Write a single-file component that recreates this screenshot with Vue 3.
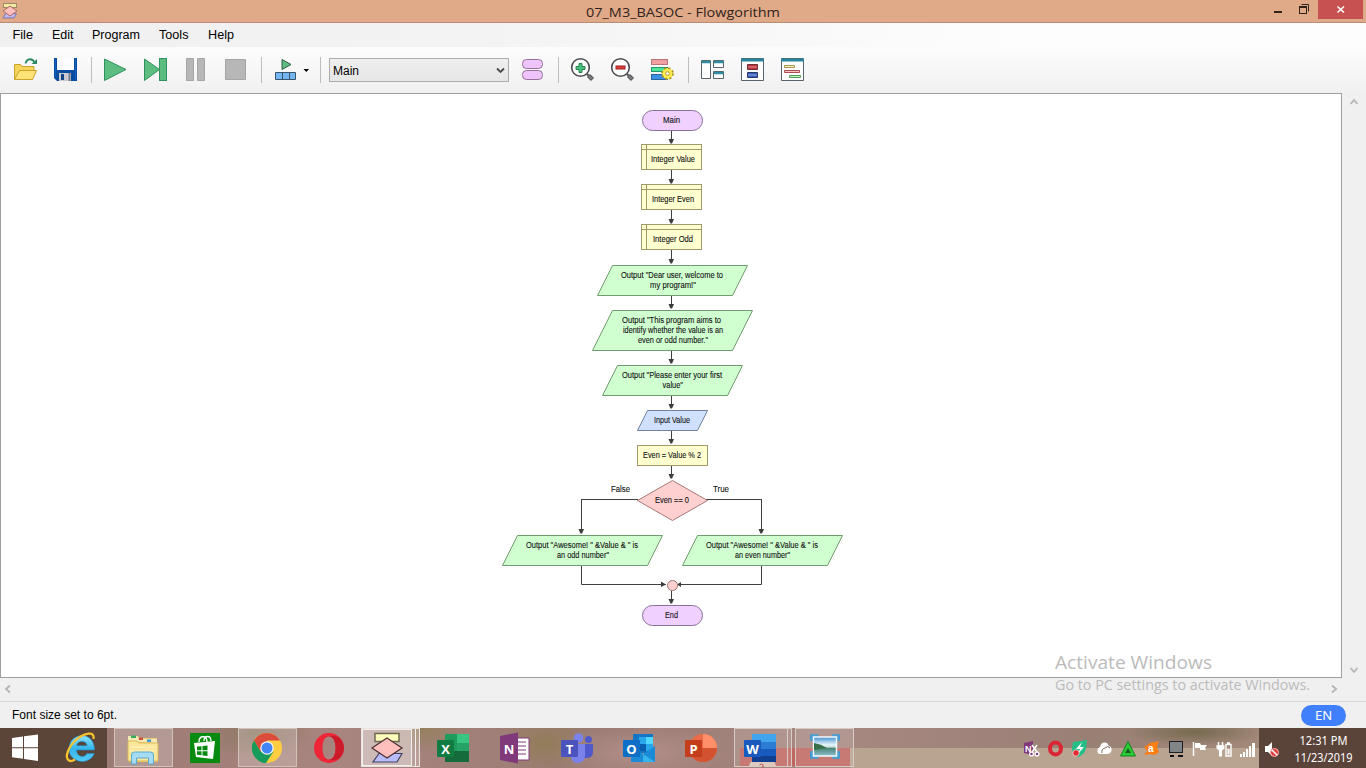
<script setup>
const menus = [
  { label: 'File', x: 12.5, w: 20.5 },
  { label: 'Edit', x: 52, w: 21.5 },
  { label: 'Program', x: 92, w: 48 },
  { label: 'Tools', x: 159, w: 29.5 },
  { label: 'Help', x: 208, w: 26 },
]

const declares = [
  { y: 144.5, text: 'Integer Value', x: 651, w: 44 },
  { y: 184.5, text: 'Integer Even', x: 652, w: 42 },
  { y: 224.5, text: 'Integer Odd', x: 653, w: 40 },
]

const outputs = [
  { pts: '612.5,265.5 747.5,265.5 732.5,295.5 597.5,295.5', lines: [['Output "Dear user, welcome to', 621, 278, 102], ['my program!"', 650, 288, 46]] },
  { pts: '612.5,310.5 752.5,310.5 732.5,350.5 592.5,350.5', lines: [['Output "This program aims to', 622, 323, 99], ['identify whether the value is an', 623, 333, 100], ['even or odd number."', 638, 343, 70]] },
  { pts: '617.5,365.5 742.5,365.5 727.5,395.5 602.5,395.5', lines: [['Output "Please enter your first', 622, 378, 100], ['value"', 662.5, 388, 20.5]] },
  { pts: '517.5,535.5 662.5,535.5 647.5,565.5 502.5,565.5', lines: [['Output "Awesome! " &Value & " is', 526, 548, 112], ['an odd number"', 557, 558, 52]] },
  { pts: '697.5,535.5 842.5,535.5 827.5,565.5 682.5,565.5', lines: [['Output "Awesome! " &Value & " is', 706, 548, 112], ['an even number"', 735, 558, 55]] },
]

const arrows = [
  [671.5, 131, 144], [671.5, 170, 184], [671.5, 210, 224], [671.5, 250, 264],
  [671.5, 296, 309], [671.5, 351, 364], [671.5, 396, 409], [671.5, 431, 444],
  [671.5, 466, 479], [671.5, 591, 604], [581.5, 499, 534], [761.5, 499, 534],
]

const labels = [
  ['Main', 663, 123, 17], ['End', 665, 618, 13], ['Input Value', 654, 423, 36],
  ['Even = Value % 2', 643, 458, 58], ['Even == 0', 655, 503, 34],
  ['False', 611, 492, 19], ['True', 713, 492, 16],
]

const office = [
  { kind: 'excel', x: 422 }, { kind: 'onenote', x: 484 }, { kind: 'teams', x: 546 },
  { kind: 'outlook', x: 608 }, { kind: 'ppt', x: 670 },
]
</script>

<template>
  <div class="screen">
    <header class="titlebar">
      <svg class="appicon" width="20" height="22" viewBox="0 0 20 22">
        <rect x="3.5" y="3.5" width="13" height="4" fill="#f3eba5" stroke="#9c8b66" />
        <path d="M5.500 13.500h11l-2.500 4.500h-11z" fill="#bcb8ec" stroke="#8277a4" />
        <path d="M10 6l7 5-7 5-7-5z" fill="#ffc0bd" stroke="#aa6b67" />
      </svg>
      <svg class="caption" width="200" height="22">
        <text x="3" y="16.500" textLength="194" lengthAdjust="spacingAndGlyphs">07_M3_BASOC - Flowgorithm</text>
      </svg>
      <div class="winbtns">
        <svg width="93" height="22" viewBox="1266 0 93 22">
          <path d="M1270 12h8" transform="translate(4 0)" stroke="#30231b" stroke-width="2" />
          <path d="M1301.500 4.500h7v7" fill="none" stroke="#30231b" />
          <rect x="1299.500" y="6.500" width="7" height="7" fill="none" stroke="#30231b" />
          <path d="M1299 7h8" stroke="#30231b" stroke-width="2" />
          <rect x="1318" y="0" width="45" height="19" fill="#c75050" />
          <path d="M1337.500 6.500l6.500 6M1344 6.500l-6.500 6" stroke="#fff" stroke-width="1.700" />
        </svg>
      </div>
    </header>

    <nav class="menubar">
      <svg width="260" height="24">
        <text v-for="m in menus" :key="m.label" :x="m.x" y="16" :textLength="m.w" lengthAdjust="spacingAndGlyphs">{{ m.label }}</text>
      </svg>
    </nav>

    <div class="toolbar">
      <svg class="tool" viewBox="5 47 40 46">
        <path d="M14.500 79.500V64.500h6l1.500 2h12v4" fill="#f5d559" stroke="#caa22c" />
        <path d="M19.500 70.500h17l-4 9h-18z" fill="#ffe377" stroke="#caa22c" />
        <path d="M25.500 63.500c1.500-5.500 7-5.500 9-1" fill="none" stroke="#2c8b61" stroke-width="1.800" />
        <path d="M37 59v5h-5.500z" fill="#2c8b61" />
      </svg>
      <svg class="tool" viewBox="45 47 40 46">
        <path d="M54 58h23v23H57l-3-3z" fill="#0a4d9f" />
        <path d="M55.500 59v18M75.500 59v20" stroke="#1262c4" />
        <rect x="57" y="58" width="17" height="12" fill="#fdfdff" />
        <rect x="59" y="73" width="12" height="8" fill="#c9cbd1" />
        <rect x="61" y="74" width="3" height="6" fill="#15448b" />
        <path d="M69.500 73v8" stroke="#777c88" stroke-width="2" />
      </svg>
      <i class="sep"></i>
      <svg class="tool" viewBox="95 47 40 46"><path d="M104.500 59v21.500l21.500-11z" fill="#5dbd80" stroke="#2e915e" /></svg>
      <svg class="tool" viewBox="135 47 40 46">
        <path d="M144.500 59v21.500l15-11z" fill="#5dbd80" stroke="#2e915e" />
        <rect x="159.500" y="58.500" width="7" height="22" fill="#5dbd80" stroke="#2e915e" />
      </svg>
      <svg class="tool" viewBox="175 47 40 46">
        <path d="M186.500 58.500h7v22h-7zM197.500 58.500h7v22h-7z" fill="#b7b7b7" stroke="#a5a5a5" />
      </svg>
      <svg class="tool" viewBox="215 47 40 46"><path d="M225.500 59.500h20v20h-20z" fill="#b7b7b7" stroke="#a5a5a5" /></svg>
      <i class="sep"></i>
      <svg class="tool" viewBox="265 47 40 46">
        <path d="M282 59.500v10l9-5z" fill="#5dbd80" stroke="#315a45" />
        <path d="M275.500 72.500h20v7h-20zM282.500 72.500v7M289.500 72.500v7" fill="#73b6f3" stroke="#3b566c" />
        <path d="M303.500 69h5.500l-2.700 3z" fill="#000" />
      </svg>
      <i class="sep wide"></i>
      <div class="combo">
        <svg width="178" height="22">
          <text x="3" y="15.500" textLength="26" lengthAdjust="spacingAndGlyphs">Main</text>
          <path d="M167 9.500l3.500 3.500 3.500-3.500" fill="none" stroke="#4c4c4c" stroke-width="1.900" />
        </svg>
      </div>
      <svg class="tool" viewBox="513 47 40 46">
        <rect x="522.500" y="59.500" width="20" height="9" rx="4" fill="#efc3fb" stroke="#937197" />
        <rect x="522.500" y="70.500" width="20" height="9" rx="4" fill="#efc3fb" stroke="#937197" />
      </svg>
      <i class="sep five"></i>
      <svg v-for="x in [582, 622]" :key="x" class="tool" :viewBox="`${x - 20} 47 40 46`">
        <path :d="`M${x + 5} 74l2.500 2.500`" stroke="#555" stroke-width="2" />
        <path :d="`M${x + 6.5} 75.500l4 4`" stroke="#55565a" stroke-width="4.500" />
        <path :d="`M${x + 7} 76l3 3`" stroke="#7b7c80" stroke-width="2.200" />
        <circle :cx="x - 1.500" cy="67.500" r="8.800" fill="#fdfdfd" stroke="#4b4a4f" stroke-width="1.600" />
        <path v-if="x === 582" d="M579 63.500h3v3h3v3h-3v3h-3v-3h-3v-3h3z" fill="#49c27b" stroke="#288253" />
        <rect v-else x="616" y="66" width="9" height="3" fill="#e43b38" stroke="#9f2227" />
      </svg>
      <svg class="tool" viewBox="642 47 40 46">
        <rect x="651.500" y="59.500" width="16" height="5" fill="#f29f9f" stroke="#b87578" />
        <rect x="651.500" y="67.500" width="16" height="4" fill="#4ae59a" stroke="#289269" />
        <rect x="651.500" y="74.500" width="16" height="5" fill="#3c8ee1" stroke="#2d64a3" />
        <circle cx="667.500" cy="73.500" r="5.400" fill="#ffee52" stroke="#b09520" stroke-width="2" stroke-dasharray="2.300 1.940" />
        <circle cx="667.500" cy="73.500" r="4.500" fill="#ffee52" />
        <circle cx="667.500" cy="73.500" r="1.900" fill="#fff" stroke="#b39830" />
      </svg>
      <i class="sep"></i>
      <svg class="tool" viewBox="692 47 40 46">
        <path d="M701.500 60.500h9v18h-9zM713.500 60.500h10v7h-10zM713.500 71.500h10v7h-10z" fill="#fdfdfd" stroke="#59636a" />
        <path d="M702 62h8.500M714 62h9.500M714 73h9.500" stroke="#308da1" stroke-width="2.500" />
      </svg>
      <svg class="tool" viewBox="732 47 40 46">
        <path d="M741.500 58.500h22v22h-22z" fill="#fdfdfd" stroke="#59636a" />
        <path d="M741 60h23" stroke="#27849a" stroke-width="3" />
        <path d="M747.500 64.500h10v5h-10z" fill="#bd3137" stroke="#6e3037" />
        <path d="M747.500 72.500h10v5h-10z" fill="#345cb8" stroke="#29366c" />
        <path d="M748 67h9M748 75h9" stroke="#fff" opacity=".5" />
      </svg>
      <svg class="tool" viewBox="772 47 40 46">
        <path d="M781.500 58.500h22v22h-22z" fill="#fdfdfd" stroke="#59636a" />
        <path d="M781 60h23" stroke="#27849a" stroke-width="3" />
        <path d="M784.500 65.500h10v2h-10z" fill="#fff2b6" stroke="#a3944f" />
        <path d="M784.500 70.500h15v2h-15z" fill="#ffc3c2" stroke="#a84c50" />
        <path d="M789.500 75.500h11v2h-11z" fill="#baf8bd" stroke="#579a59" />
      </svg>
    </div>

    <main class="work">
      <div class="canvas">
        <svg class="chart" width="1340" height="583" viewBox="1 94 1340 583">
          <g stroke="#404040" fill="none">
            <path d="M638 499.500H581.500V530M706 499.500H761.500V530M581.500 566v18.500H666M761.500 566v18.500H679" />
          </g>
          <g v-for="(a, i) in arrows" :key="i">
            <path :d="`M${a[0]} ${a[1]}V${a[2] - 4}`" stroke="#404040" />
            <path :d="`M${a[0] - 3} ${a[2] - 5}h5.500l-2 4.500h-1.500z`" fill="#3c3c3c" />
          </g>
          <path d="M661 581.500v5.500l5-2.500zM681 582v5l-4-2.500z" fill="#3c3c3c" />
          <rect v-for="y in [110.500, 605.500]" :key="y" x="642.500" :y="y" width="60" height="20" rx="10" fill="#f0d0ff" stroke="#88719a" />
          <g v-for="d in declares" :key="d.y">
            <rect x="641.500" :y="d.y" width="60" height="25" fill="#ffffd0" stroke="#a19a6b" />
            <path :d="`M641 ${d.y + 5}h61M646.500 ${d.y}v25`" stroke="#a19a6b" />
            <text :x="d.x" :y="d.y + 17.500" :textLength="d.w" lengthAdjust="spacingAndGlyphs">{{ d.text }}</text>
          </g>
          <g v-for="(o, i) in outputs" :key="i">
            <polygon :points="o.pts" fill="#d0ffd0" stroke="#719b71" />
            <text v-for="l in o.lines" :key="l[0]" :x="l[1]" :y="l[2]" :textLength="l[3]" lengthAdjust="spacingAndGlyphs">{{ l[0] }}</text>
          </g>
          <polygon points="647.500,410.500 707.500,410.500 697.500,430.500 637.500,430.500" fill="#d0e0ff" stroke="#71809f" />
          <rect x="637.500" y="445.500" width="70" height="20" fill="#ffffd0" stroke="#a19a6b" />
          <polygon points="672.500,480.500 707.500,500.500 672.500,520.500 637.500,500.500" fill="#ffd0d0" stroke="#a87878" />
          <circle cx="672.500" cy="585.500" r="5" fill="#ffd0d0" stroke="#a17373" />
          <text v-for="l in labels" :key="l[0]" :x="l[1]" :y="l[2]" :textLength="l[3]" lengthAdjust="spacingAndGlyphs">{{ l[0] }}</text>
        </svg>
      </div>
      <div class="vscroll">
        <svg width="10" height="8"><path d="M1.500 6l3.500-4 3.500 4" /></svg>
        <svg width="10" height="8"><path d="M1.500 2l3.500 4 3.500-4" /></svg>
      </div>
    </main>
    <div class="hscroll">
      <svg width="8" height="10"><path d="M6 1.500l-4 3.500 4 3.500" /></svg>
      <svg width="8" height="10"><path d="M2 1.500l4 3.500-4 3.500" /></svg>
    </div>
    <footer class="status">
      <svg width="120" height="24"><text x="0" y="17" textLength="105" lengthAdjust="spacingAndGlyphs">Font size set to 6pt.</text></svg>
      <span class="lang">EN</span>
    </footer>

    <svg class="watermark" width="270" height="50" viewBox="1050 648 270 50">
      <text x="1055" y="669" font-size="19" textLength="157" lengthAdjust="spacingAndGlyphs">Activate Windows</text>
      <text x="1055" y="690" font-size="14" textLength="255" lengthAdjust="spacingAndGlyphs">Go to PC settings to activate Windows.</text>
    </svg>

    <div class="taskbar">
      <div class="start">
        <svg width="107" height="40" viewBox="0 728 107 40">
          <path d="M12 738l11-1.500v10.700H12zM24 736.300l14-1.900v12.800H24zM12 748.200h11v10.600L12 757.200zM24 748.200h14V761l-14-2z" fill="#fff" />
          <defs>
            <linearGradient id="ie" x1="0" y1="0" x2="0" y2="1"><stop offset="0" stop-color="#8fe3fb" /><stop offset=".5" stop-color="#35b5ec" /><stop offset="1" stop-color="#54c9f4" /></linearGradient>
          </defs>
          <path d="M94.500 750H76.500c0 7 8 8.500 10.500 3.500h7.300C89 766.500 69 762.500 69 749c0-17 25.500-19 25.500 1zm-7.500-4.300c0-5.500-10-6-10.300 0z" fill="url(#ie)" stroke="#1d90ce" stroke-width=".6" />
          <path d="M93.500 739c1.500-9-10-5.500-17 .5-8 7-12.500 18-7.500 21 1.500 1 4 .3 6-1" fill="none" stroke="#f3c22d" stroke-width="2.300" />
        </svg>
      </div>

      <div class="slot first">
        <div class="open"></div>
        <svg viewBox="112 728 62 40">
          <path d="M129 736h9l2 2h17v24h-28z" fill="#e9cd72" />
          <path d="M128 741v-5h9l2 3h18v4z" fill="#f7e9b6" />
          <path d="M131 735.500h5v2.500h-5z" fill="#38a85c" /><path d="M139 737.500h4v2.500h-4z" fill="#d34c39" /><path d="M147 739.500h4v2.500h-4z" fill="#3a9bd0" />
          <path d="M128 741h9l2 2h19v18h-30z" fill="#fae79c" stroke="#dbb957" />
          <path d="M130 747h26M130 751h26" stroke="#fff3be" />
          <path d="M131.500 764v-9q0-3 3-3h16q3 0 3 3v9h-5v-6h-12v6z" fill="#a5dcf4" stroke="#5ca9ce" />
        </svg>
      </div>
      <div class="slot">
        <svg viewBox="174 728 62 40">
          <rect x="190" y="733" width="30" height="30" fill="#078a10" />
          <path d="M199 742c0-7 8-7 8 0M204 741c0-6 7-6 7 0" fill="none" stroke="#fff" stroke-width="1.300" />
          <path d="M194 743l21-2-2 18-17-2z" fill="#fff" />
          <path d="M197 746.500l4.500-.3v4h-4.500zM202.500 746l5-.4v4.600h-5zM197 751.200h4.500v4l-4.500-.5zM202.500 751.200h5v4.800l-5-.6z" fill="#078a10" />
        </svg>
      </div>
      <div class="slot">
        <div class="open"></div>
        <svg viewBox="236 728 62 40">
          <circle cx="267" cy="748" r="15" fill="#ffcd42" />
          <path d="M267 748L254 740.500A15 15 0 0 1 280 740.500H267z" fill="#dc4c3c" />
          <path d="M254 740.500A15 15 0 0 0 266 763l7.500-11.500-6.500-3.500-7 3z" fill="#179b5b" />
          <path d="M254 740.500l6.500 11 6.500-3.500v-7.500z" fill="#dc4c3c" />
          <path d="M254 740.500l6.500 11L266 763A15 15 0 0 1 254 740.500z" fill="#179b5b" />
          <circle cx="267" cy="748" r="6.800" fill="#f5f5f5" /><circle cx="267" cy="748" r="5.500" fill="#4285f4" />
        </svg>
      </div>
      <div class="slot">
        <svg viewBox="298 728 62 40">
          <path fill-rule="evenodd" d="M329 733a15 15 0 1 0 0 30a15 15 0 1 0 0-30zM329 736.500c4.500 0 6.500 5 6.500 11.500s-2 11.500-6.500 11.500-6.500-5-6.500-11.500 2-11.500 6.500-11.500z" fill="#ee2637" />
          <path d="M329 736.500c9-3 15 4 15 11.500s-6 14.500-15 11.500c4.500 0 6.500-5 6.500-11.500s-2-11.500-6.500-11.500z" fill="#b51221" opacity=".55" />
        </svg>
      </div>
      <div class="slot">
        <svg viewBox="360 728 62 40">
          <rect x="361.500" y="728.500" width="58" height="38" fill="#d9cdca" fill-opacity=".4" stroke="#eae2df" />
          <rect x="362.500" y="729.500" width="49" height="36" fill="#dfd4d1" fill-opacity=".5" stroke="#f4efed" />
          <path d="M415.500 729v38" stroke="#f4efed" />
          <rect x="375" y="733.500" width="24" height="8" fill="#ffffbd" stroke="#6d6a4e" stroke-width="1.500" />
          <path d="M379 753.500h23l-5 8.500h-24z" fill="#b9bcfa" stroke="#434264" stroke-width="1.200" />
          <path d="M387 738l15 10-15 10-15-10z" fill="#ffbfbd" stroke="#49302f" stroke-width="1.200" />
        </svg>
      </div>
      <div v-for="o in office" :key="o.kind" class="slot">
        <svg :viewBox="`${o.x} 728 62 40`" class="brand">
          <template v-if="o.kind === 'excel'">
            <path d="M445 734h24v28h-24z" fill="#1f9b5b" /><path d="M457 734h12v9h-12z" fill="#38c481" /><path d="M457 743h12v8h-12z" fill="#25a366" /><path d="M445 751h24v11h-24z" fill="#166b3c" />
            <rect x="437" y="740" width="17" height="17" rx="1" fill="#107c41" /><text x="445.500" y="753.500">X</text>
          </template>
          <template v-else-if="o.kind === 'onenote'">
            <path d="M515 738h14v22h-14z" fill="#fff" stroke="#80397b" />
            <path d="M517 742h9M517 746h9M517 750h9M517 754h9" stroke="#80397b" />
            <path d="M500 736l18-3.500v31l-18-3.500z" fill="#80397b" /><text x="509" y="753.500">N</text>
          </template>
          <template v-else-if="o.kind === 'teams'">
            <circle cx="578.500" cy="738" r="4.800" fill="#7b83eb" /><circle cx="588.500" cy="739.500" r="3.500" fill="#5059c9" />
            <path d="M581 744h12v8q0 6-7 6h-5z" fill="#5059c9" /><path d="M571 744h14v11q0 8-8 8-6 0-6-8z" fill="#7b83eb" />
            <rect x="561" y="740" width="17" height="17" rx="1" fill="#4b53bc" /><text x="569.500" y="753.500">T</text>
          </template>
          <template v-else-if="o.kind === 'outlook'">
            <path d="M633 734h20v19h-20z" fill="#1475c7" /><path d="M639 737h7v7h-7z" fill="#28a8ea" /><path d="M646 737h7v7h-7z" fill="#50d9ff" /><path d="M639 744h7v7h-7z" fill="#0b5fae" /><path d="M646 744h7v7h-7z" fill="#28a8ea" />
            <path d="M631 747l12 7 12-8v16h-24z" fill="#1b8bd8" /><path d="M643 754l12 8h-12z" fill="#36b4ed" />
            <rect x="623" y="740" width="17" height="17" rx="1" fill="#0f6fc6" /><text x="631.500" y="753.500">O</text>
          </template>
          <template v-else>
            <circle cx="703" cy="748" r="14" fill="#ed6c47" /><path d="M703 734a14 14 0 0 1 14 14h-14z" fill="#ff8f6b" /><path d="M689 748a14 14 0 0 0 28 0z" fill="#d35230" />
            <rect x="685" y="740" width="17" height="17" rx="1" fill="#c43e1c" /><text x="693.500" y="753.500">P</text>
          </template>
        </svg>
      </div>
      <div class="slot">
        <svg class="brand" viewBox="732 728 62 40">
          <path d="M740 748h54v18h-54z" fill="#c65e58" opacity=".8" /><path d="M749 766q1-6 8-6h12q6 0 7 6z" fill="#d7c2b7" />
          <rect x="734.500" y="728.500" width="57" height="38" fill="#fff" fill-opacity=".13" stroke="#d8cbc6" /><path d="M787.500 729v38" stroke="#d8cbc6" />
          <path d="M752 734h24v28h-24z" fill="#185abd" /><path d="M752 734h24v8h-24z" fill="#41a5ee" /><path d="M752 742h24v7h-24z" fill="#2b7cd3" /><path d="M752 756h24v6h-24z" fill="#103f91" />
          <rect x="744" y="740" width="17" height="17" rx="1" fill="#185abd" /><text x="752.500" y="753.500">W</text>
          <path d="M759.500 765q2-2 3.500 0t-1.500 2.500" fill="none" stroke="#b4534d" />
        </svg>
      </div>
      <div class="slot">
        <svg viewBox="794 728 62 40">
          <path d="M794 748h56v18h-56z" fill="#c65e58" opacity=".8" />
          <rect x="795.500" y="728.500" width="58" height="38" fill="#fff" fill-opacity=".13" stroke="#d8cbc6" />
          <defs><linearGradient id="sky" x1="0" y1="0" x2="0" y2="1"><stop offset="0" stop-color="#3f8fd0" /><stop offset=".4" stop-color="#e2f3fa" /><stop offset=".52" stop-color="#cfe3dc" /><stop offset=".6" stop-color="#4b8576" /><stop offset="1" stop-color="#8dc0d4" /></linearGradient></defs>
          <path d="M810.500 735h4M836 735h3.500v5M810.500 740v-5M810.500 752v6h6M839.500 752v6h-6" fill="none" stroke="#2f7fb8" stroke-width="1" />
          <path d="M812.500 741v-4.500h6M832 736.500h5.500v4.500M812.500 751v5.500h6M837.500 751v5.500h-5.500" fill="none" stroke="#4c9fd2" stroke-width="4.500" />
          <path d="M813.500 737h23v19h-23z" fill="url(#sky)" stroke="#f4fafd" stroke-width="1.400" />
          <path d="M814 743q7 1 13 5l-13 2z" fill="#37704a" />
        </svg>
      </div>

      <svg class="tray" width="265" height="40" viewBox="1019 728 265 40">
        <path d="M1024 743l9-2v14l-9-2z" fill="#80397b" /><text x="1025" y="751.500" fill="#fff" font-size="9" font-weight="700">N</text>
        <path d="M1032 745l5 7M1037 745l-5 7" stroke="#fff" stroke-width="1.500" /><circle cx="1031.500" cy="754" r="1.900" fill="#80397b" stroke="#fff" stroke-width="1.300" /><circle cx="1037" cy="754" r="1.900" fill="#80397b" stroke="#fff" stroke-width="1.300" />
        <ellipse cx="1055.500" cy="748.500" rx="5.500" ry="6" fill="none" stroke="#da2634" stroke-width="4" />
        <path d="M1073 742l8-1 6-1-1 9q-2 6-8 8-6-3-6-8z" fill="#22bf88" /><path d="M1082 742l-6 7h4l-2 5 6-7h-4z" fill="#fff" /><circle cx="1076" cy="753" r="3.200" fill="#e52b32" stroke="#fff" stroke-width=".6" />
        <path d="M1098 753q-2-4 2-6 1-6 7-4l2 3q4 1 2 6-1 2-4 2h-7q-2 0-2-1z" fill="#fff" /><path d="M1102 753q-1-4 3-5 3-3 5 0" fill="none" stroke="#76655d" />
        <path d="M1128 741.500l7.500 14.500h-15z" fill="#2acc34" stroke="#138320" /><path d="M1128 748l3 5h-6z" fill="#165a21" />
        <path d="M1144 747l6-4 9-2-2 6 2 5-4 3-5-1-6 1 3-4z" fill="#fb7e16" /><text x="1148" y="752" fill="#fff" font-size="10" font-weight="700">a</text>
        <rect x="1169.500" y="741.500" width="13" height="11" fill="#828588" stroke="#202020" /><path d="M1170 756h4M1178 756h5" stroke="#111" stroke-width="2" />
        <path d="M1193.500 742v14" stroke="#fff" stroke-width="1.500" /><path d="M1195 743h5l1 2h6l-2 3 1 2h-6v-2h-5z" fill="#fff" />
        <path d="M1218.500 742v3M1222.500 742v3" stroke="#fff" stroke-width="1.500" /><path d="M1216.500 745h8v3.500l-2.500 2v6h-3v-6l-2.500-2z" fill="#fff" /><path d="M1226 744.500h5v11.500h-5zM1227 743h3" fill="none" stroke="#fff" stroke-width="1.400" /><path d="M1227.500 749h2v5.500h-2z" fill="#fff" />
        <path d="M1240 754h2v3h-2zM1243 752h2v5h-2zM1246 749h2v8h-2zM1249 746h2v11h-2zM1252 743h3v14h-3z" fill="#fff" />
        <rect x="1259" y="728" width="25" height="40" fill="#5a4339" />
        <path d="M1265 746h3l4-4v14l-4-4h-3z" fill="#fff" /><circle cx="1274.500" cy="752.500" r="4" fill="#e03d3d" stroke="#f6b3b3" /><path d="M1272 750l5 5" stroke="#fff" stroke-width="1.500" />
      </svg>
      <svg class="clock" width="82" height="40" viewBox="1284 728 82 40">
        <text x="1299.500" y="745" textLength="48" lengthAdjust="spacingAndGlyphs">12:31 PM</text>
        <text x="1294.500" y="762" textLength="58" lengthAdjust="spacingAndGlyphs">11/23/2019</text>
      </svg>
    </div>
  </div>
</template>

<style>
body { margin: 0; overflow: hidden; }
</style>

<style scoped>
.screen { position: relative; width: 1366px; height: 768px; display: flex; flex-direction: column; overflow: hidden; background: #f0f0f0; font-family: "Liberation Sans", Arial, sans-serif; font-size: 12px; color: #000; }
svg { display: block; flex: none; }
.titlebar { height: 22px; flex: none; display: flex; background: #e0aa88; border-bottom: 1px solid #b98d75; }
.caption { margin-left: 563px; font-family: "Open Sans", "Noto Sans", sans-serif; font-size: 13px; fill: #30221b; }
.winbtns { margin-left: auto; padding-right: 7px; }
.winbtns svg { overflow: visible; }
.menubar { height: 24px; flex: none; background: linear-gradient(90deg, #f0f0f0, #f3f3f3 35%, #fdfdfd 75%); }
.menubar text, .combo text { font-size: 12.500px; }
.toolbar { height: 46px; flex: none; display: flex; align-items: center; padding-left: 5px; background: linear-gradient(#fcfcfc, #f8f8f8 40%, #f0f0f0); }
.tool { width: 40px; height: 46px; overflow: visible; }
.sep { width: 1px; height: 26px; margin: 0 3px 0 6px; background: #bdbdbd; }
.sep.wide { margin: 0 8px 0 15px; }
.sep.five { margin-left: 5px; }
.combo { width: 178px; height: 22px; border: 1px solid #acacac; background: linear-gradient(#efefef, #e6e6e6); margin: 0 4px 1px 0; }
.work { height: 585px; flex: none; display: flex; }
.canvas { width: 1340px; height: 583px; border: 1px solid #a0a0a0; background: #fff; }
.chart text { font-size: 8.300px; fill: #101010; stroke: #101010; stroke-width: .1px; }
.vscroll { flex: 1; display: flex; flex-direction: column; justify-content: space-between; align-items: center; padding: 5px 1px 4px 0; }
.vscroll path, .hscroll path { fill: none; stroke: #b5b5b5; stroke-width: 1.800; }
.hscroll { height: 24px; flex: none; display: flex; justify-content: space-between; align-items: center; padding: 0 28px 1px 4px; border-bottom: 1px solid #d7d7d7; box-sizing: border-box; }
.status { height: 26px; flex: none; display: flex; justify-content: space-between; padding: 0 20px 0 12px; box-sizing: border-box; }
.lang { width: 45px; height: 21px; margin-top: 3px; border-radius: 11px; background: #4080fc; color: #fff; text-align: center; font: 13px/21px "Noto Sans", sans-serif; }
.watermark { position: absolute; left: 1050px; top: 648px; fill: #bbb; font-family: "Open Sans", "Noto Sans", sans-serif; font-weight: 400; }
.taskbar { height: 40px; flex: none; display: flex; background:
  linear-gradient(90deg, transparent 850px, #b9a391 850px) 0 20px / 100% 20px no-repeat,
  radial-gradient(ellipse 70px 14px at 1195px 4px, #76694f, transparent),
  radial-gradient(ellipse 45px 30px at 545px 15px, #927d59, transparent),
  radial-gradient(ellipse 50px 25px at 420px 0, #93805c, transparent),
  radial-gradient(ellipse 60px 25px at 255px 5px, #8d7964, transparent),
  radial-gradient(ellipse 90px 30px at 640px 25px, #b48f8b, transparent),
  linear-gradient(90deg, #95766e, #a9857f 25%, #987a71 45%, #a88882 60%, #998075 80%, #a98e7d); }
.start { width: 107px; background: #5b4438; }
.slot { position: relative; width: 62px; height: 40px; flex: none; }
.slot.first { margin-left: 5px; }
.slot svg { position: relative; width: 62px; height: 40px; }
.open { position: absolute; left: 2px; top: 0; width: 57px; height: 37px; border: 1px solid #d1c2bb; background: rgba(255, 255, 255, .22); }
.brand text { font: 700 13px "Open Sans", sans-serif; fill: #fff; text-anchor: middle; }
.tray { margin-left: auto; }
.clock { background: #5a4339; }
.clock text { font-family: "Noto Sans", sans-serif; font-size: 12px; fill: #fff; }
</style>
